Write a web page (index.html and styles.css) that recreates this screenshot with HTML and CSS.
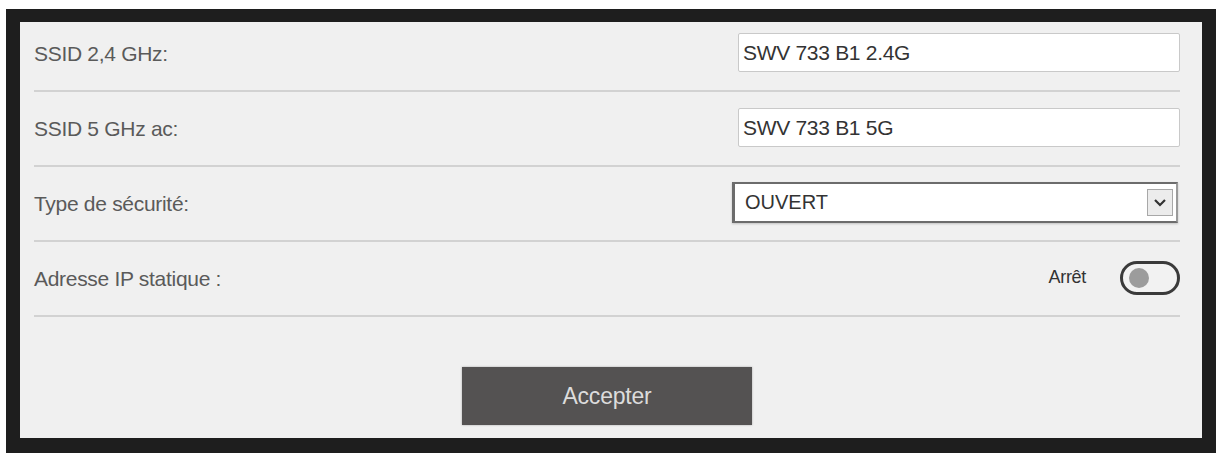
FILE: index.html
```html
<!DOCTYPE html>
<html lang="fr">

<head>
    <meta charset="utf-8">
    <meta name="viewport" content="width=device-width, initial-scale=1">
    <title>Paramètres Wi-Fi</title>
    <link rel="stylesheet" href="styles.css">
</head>

<body>
    <div class="frame">
        <form class="panel">
            <div class="row">
                <label class="label" for="ssid24">SSID 2,4 GHz:</label>
                <input class="field" id="ssid24" type="text" value="SWV 733 B1 2.4G">
            </div>

            <div class="row">
                <label class="label" for="ssid5">SSID 5 GHz ac:</label>
                <input class="field" id="ssid5" type="text" value="SWV 733 B1 5G">
            </div>

            <div class="row">
                <span class="label">Type de sécurité:</span>
                <div class="select">
                    <span class="select-value">OUVERT</span>
                    <span class="select-arrow">
                        <svg width="14" height="10" viewBox="0 0 14 10">
                            <path d="M2 2 L7 7 L12 2" fill="none" stroke="#333" stroke-width="2.2"/>
                        </svg>
                    </span>
                </div>
            </div>

            <div class="row">
                <span class="label">Adresse IP statique :</span>
                <div class="switch-wrap">
                    <span class="switch-text">Arrêt</span>
                    <span class="switch"><span class="knob"></span></span>
                </div>
            </div>

            <div class="actions">
                <button class="btn" type="button">Accepter</button>
            </div>
        </form>
    </div>
</body>

</html>
```

FILE: styles.css
```css
body {
    margin: 0;
    background-color: #ffffff;
    font-family: "Liberation Sans", Arial, sans-serif;
    overflow: hidden;
}

/* dark outer frame around the settings box */
.frame {
    margin: 9px 4px 0 6px;
    border: 14px solid #1e1e1e;
    border-top-width: 13px;
    border-bottom-width: 20px;
}

.panel {
    background-color: #f0f0f0;
    padding: 0 22px 13px 14px;
}

.row {
    display: flex;
    align-items: center;
    padding: 16px 0 18px;
    border-bottom: 2px solid #d2d2d2;
}

.row:first-child {
    padding-top: 11px;
}

.label {
    flex: 1;
    font-size: 21px;
    letter-spacing: -0.3px;
    color: #5a5a5a;
    padding-top: 3px;
}

.field {
    box-sizing: border-box;
    width: 442px;
    height: 39px;
    margin: 0;
    padding: 0 4px;
    border: 1px solid #c9c9c9;
    border-radius: 2px;
    background-color: #ffffff;
    font-family: "Liberation Sans", Arial, sans-serif;
    font-size: 21px;
    letter-spacing: -0.3px;
    color: #333333;
    outline: none;
}

/* security type dropdown */
.select {
    box-sizing: border-box;
    display: flex;
    align-items: center;
    width: 446px;
    height: 41px;
    margin: -1px 2px -1px 0;
    padding: 0 3px 0 10px;
    background-color: #ffffff;
    border: 2px solid #6c6c6c;
    border-left-width: 3px;
    border-right-color: #9a9a9a;
    box-shadow: 0 1px 2px rgba(0, 0, 0, 0.2);
}

.select-value {
    flex: 1;
    font-size: 20px;
    color: #333333;
}

.select-arrow {
    display: flex;
    align-items: center;
    justify-content: center;
    width: 26px;
    height: 27px;
    box-sizing: border-box;
    border: 1px solid #a8a8a8;
    background-color: #ececec;
}

.switch-wrap {
    display: flex;
    align-items: center;
    gap: 34px;
    height: 39px;
}

.switch-text {
    font-size: 18px;
    letter-spacing: -0.3px;
    color: #333333;
}

.switch {
    box-sizing: border-box;
    display: flex;
    align-items: center;
    width: 60px;
    height: 34px;
    padding-left: 6px;
    border: 3px solid #3a3a3a;
    border-radius: 17px;
    background-color: #f2f2f2;
}

.knob {
    width: 20px;
    height: 20px;
    border-radius: 50%;
    background-color: #9c9c9c;
}

.actions {
    display: flex;
    justify-content: center;
    padding-top: 50px;
}

.btn {
    width: 290px;
    height: 58px;
    border: none;
    background-color: #545252;
    color: #dcdcdc;
    font-family: "Liberation Sans", Arial, sans-serif;
    font-size: 23px;
    letter-spacing: -0.2px;
    box-shadow: 0 0 2px rgba(0, 0, 0, 0.3);
}
```
